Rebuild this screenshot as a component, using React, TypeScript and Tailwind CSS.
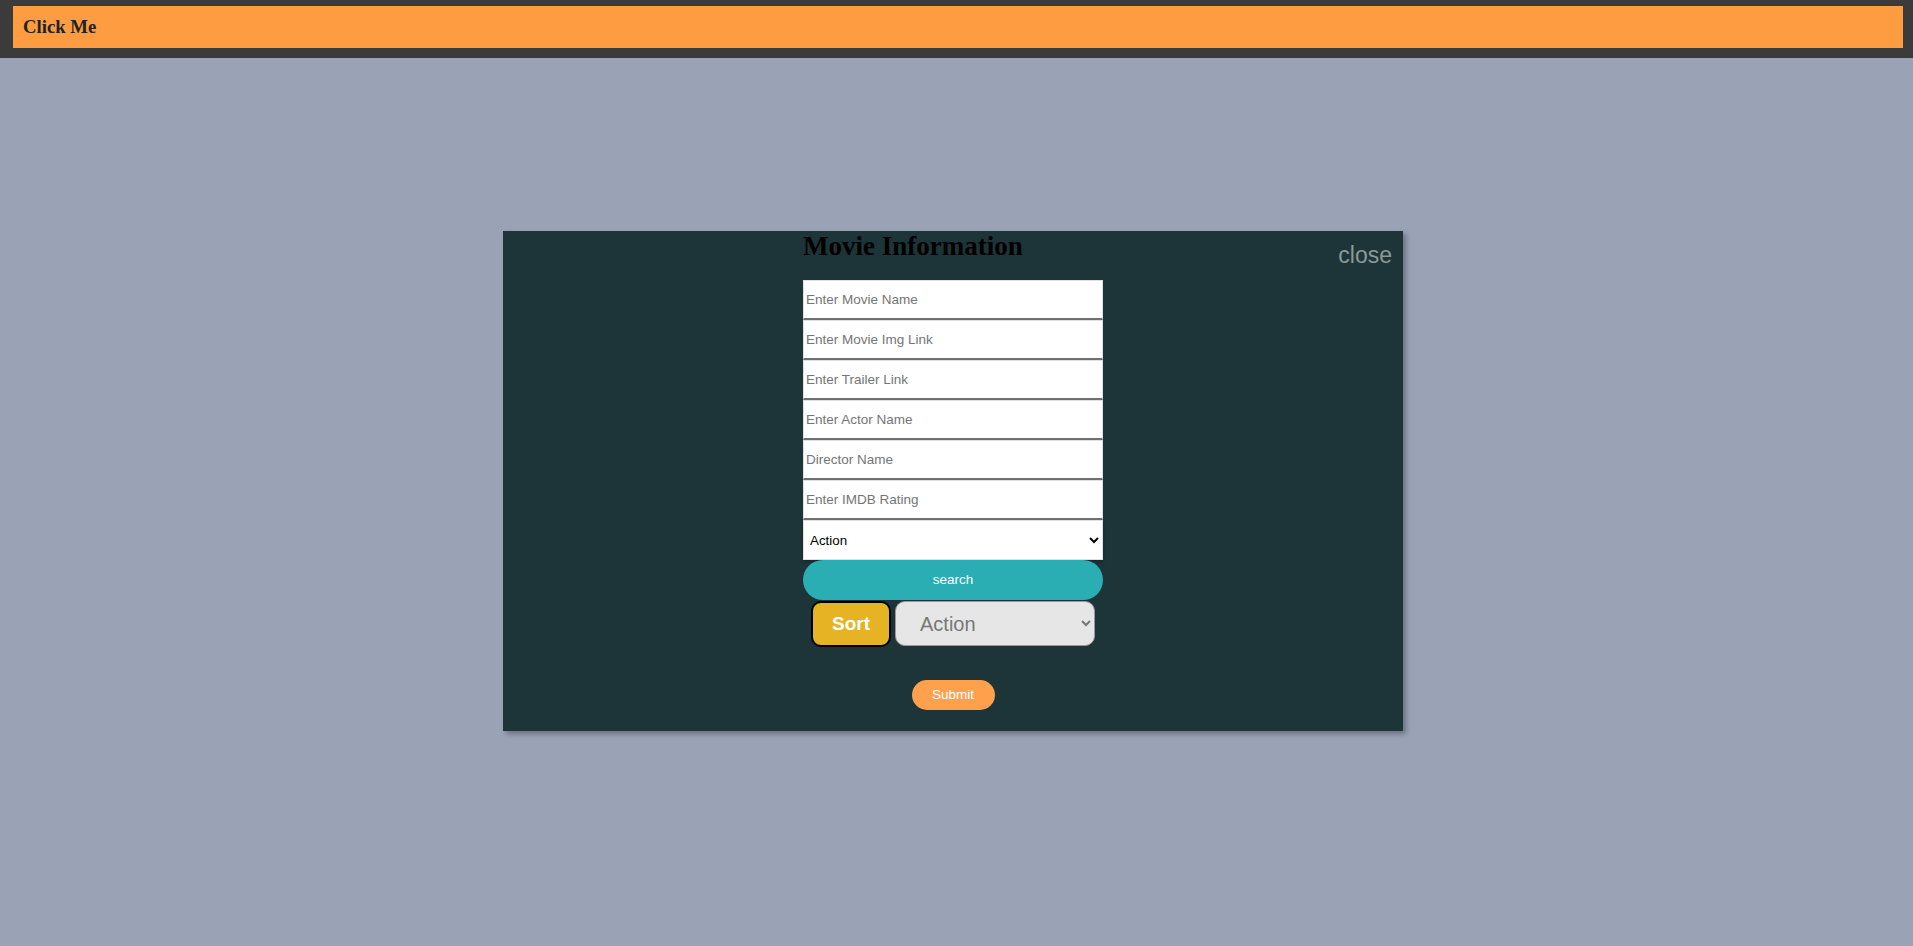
import React, { useState } from 'react'

const fields = [
  'Enter Movie Name',
  'Enter Movie Img Link',
  'Enter Trailer Link',
  'Enter Actor Name',
  'Director Name',
  'Enter IMDB Rating',
]

const genres = ['Action', 'Comedy', 'Drama', 'Horror', 'Romance', 'Thriller']

export default function App() {
  const [open, setOpen] = useState(true)

  return (
    <div className="min-h-[946px] bg-[#9aa3b5] font-['Liberation_Sans',Arial,sans-serif]">
      <header className="bg-[#3b3b3b] pt-[6px] pb-[10px] pl-[13px] pr-[10px]">
        <button
          onClick={() => setOpen(true)}
          className="flex h-[42px] w-full items-center bg-[#fe9c42] pl-[10px] text-left font-['Liberation_Serif','Times_New_Roman',serif] text-[18.72px] font-bold text-[#222]"
        >
          Click Me
        </button>
      </header>

      {open && (
        <div className="pt-[173px] pl-[503px]">
          <div className="relative w-[900px] bg-[#1d3538] pb-[21px] shadow-[3px_3px_5px_rgba(0,0,0,0.3)]">
            <button
              onClick={() => setOpen(false)}
              className="absolute right-[11px] top-[13px] text-[23px] leading-none text-[#8a9999]"
            >
              close
            </button>

            <div className="mx-auto flex w-[300px] flex-col">
              <h2 className="m-0 font-['Liberation_Serif','Times_New_Roman',serif] text-[27px] font-bold leading-[31px] text-black">
                Movie Information
              </h2>

              <div className="mt-[18px] flex flex-col">
                {fields.map((f) => (
                  <input
                    key={f}
                    type="text"
                    placeholder={f}
                    className="h-[40px] w-full border border-[#e0e0e0] border-b-2 border-b-[#707070] bg-white px-[2px] text-[13.5px] text-black outline-none placeholder:text-[#757575]"
                  />
                ))}
                <select className="h-[40px] w-full border border-[#e0e0e0] bg-white px-[2px] text-[13.33px] text-black shadow-[0_2px_3px_rgba(0,0,0,0.25)] outline-none">
                  {genres.map((g) => (
                    <option key={g}>{g}</option>
                  ))}
                </select>
              </div>

              <button className="h-[40px] w-full rounded-full bg-[#2aadb3] text-[13.5px] font-medium text-white">
                search
              </button>

              <div className="mt-[1px] flex justify-center gap-[4px]">
                <button className="h-[46px] w-[80px] rounded-[10px] border-2 border-black bg-[#e6b325] text-[19px] font-extrabold text-white">
                  Sort
                </button>
                <select className="h-[45px] w-[200px] rounded-[10px] border border-[#9a9a9a] bg-[#e6e6e6] pl-[20px] pr-[6px] text-[20px] text-[#777] outline-none">
                  {genres.map((g) => (
                    <option key={g}>{g}</option>
                  ))}
                </select>
              </div>

              <div className="mt-[33px] flex justify-center">
                <button className="h-[30px] w-[83px] rounded-full bg-[#ffa04d] text-[13.5px] font-medium text-white">
                  Submit
                </button>
              </div>
            </div>
          </div>
        </div>
      )}
    </div>
  )
}
